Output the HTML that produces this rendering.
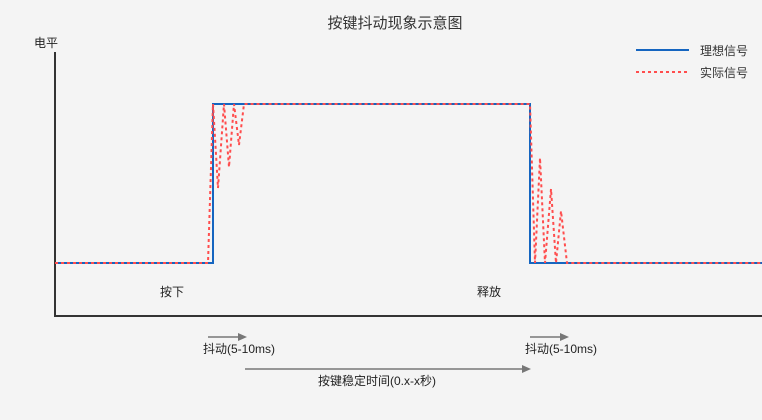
<!DOCTYPE html>
<html><head><meta charset="utf-8"><style>
html,body{margin:0;padding:0;background:#f4f4f4;}
svg{display:block;font-family:"Liberation Sans","Noto Sans CJK SC",sans-serif;}
</style></head><body>
<svg width="762" height="420" viewBox="0 0 762 420" xmlns="http://www.w3.org/2000/svg">
<rect width="762" height="420" fill="#f4f4f4"/>
<text x="395" y="28" font-size="15" fill="#333" text-anchor="middle">按键抖动现象示意图</text>
<text x="34" y="47" font-size="12" fill="#222">电平</text>
<path d="M55 52 V316 H762" fill="none" stroke="#333" stroke-width="2"/>
<path d="M55 263 H213 V104 H530 V263 H762" fill="none" stroke="#1565c0" stroke-width="2"/>
<path d="M55 263 H208 L213 104 L218 188 L224 104 L229 167 L234 104 L239 145 L244 104 H530 L535 263 L540 158 L545 263 L551 189 L556 263 L561 211 L567 263 H762" fill="none" stroke="#ff4d4d" stroke-width="2" stroke-dasharray="3 3"/>
<line x1="636" y1="50" x2="689" y2="50" stroke="#1565c0" stroke-width="2"/>
<line x1="636" y1="72" x2="689" y2="72" stroke="#ff4d4d" stroke-width="2" stroke-dasharray="3 3"/>
<text x="700" y="55" font-size="12" fill="#333">理想信号</text>
<text x="700" y="77" font-size="12" fill="#333">实际信号</text>
<text x="160" y="296" font-size="12" fill="#222">按下</text>
<text x="477" y="296" font-size="12" fill="#222">释放</text>
<g stroke="#777" stroke-width="1.5" fill="#777">
<line x1="208" y1="337" x2="240" y2="337"/><path d="M247 337 L238 333 L238 341Z" stroke="none"/>
<line x1="530" y1="337" x2="562" y2="337"/><path d="M569 337 L560 333 L560 341Z" stroke="none"/>
<line x1="245" y1="369" x2="524" y2="369"/><path d="M531 369 L522 365 L522 373Z" stroke="none"/>
</g>
<text x="203" y="353" font-size="12" fill="#222">抖动(5-10ms)</text>
<text x="525" y="353" font-size="12" fill="#222">抖动(5-10ms)</text>
<text x="318" y="385" font-size="12" fill="#222">按键稳定时间(0.x-x秒)</text>
</svg>
</body></html>
